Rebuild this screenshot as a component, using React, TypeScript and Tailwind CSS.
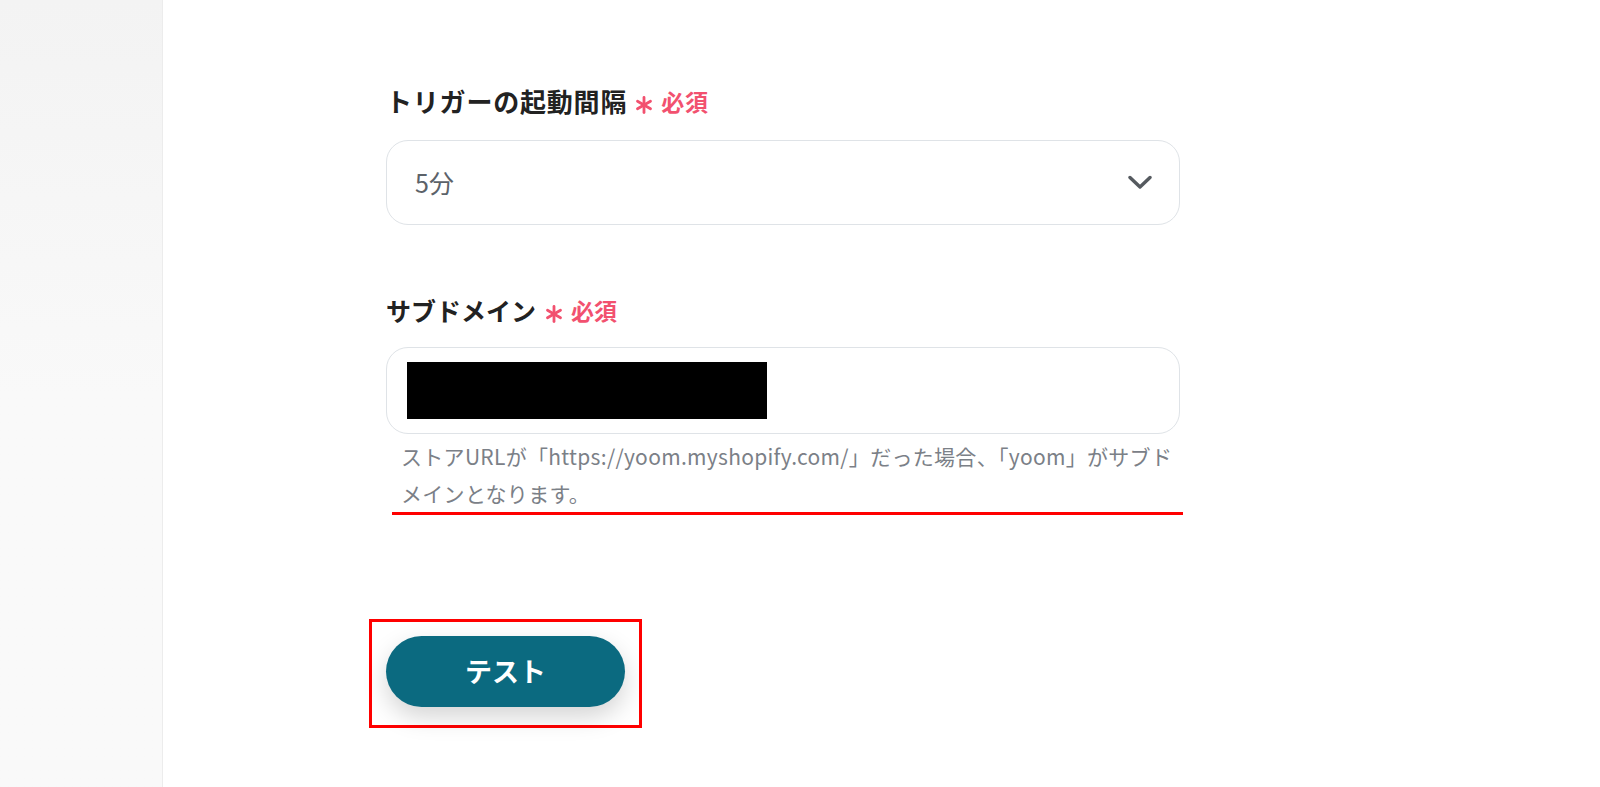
const font = "font-['Noto_Sans_CJK_JP','Noto_Sans',sans-serif]";

const Required = ({ gap }: { gap: string }) => (
  <span className={`inline-flex items-center text-[#f2516f] ${gap}`}>
    <svg width="18" height="18" viewBox="0 0 18 18" className="relative top-[4px]">
      <g stroke="#f2516f" strokeWidth="2.8" strokeLinecap="round">
        <line x1="9" y1="1.5" x2="9" y2="16.5" />
        <line x1="2.5" y1="5.2" x2="15.5" y2="12.8" />
        <line x1="2.5" y1="12.8" x2="15.5" y2="5.2" />
      </g>
    </svg>
    <span className="ml-[8px] text-[23px] font-bold">必須</span>
  </span>
);

const App = () => {
  return (
    <div className={`flex h-[787px] w-full bg-white ${font}`}>
      {/* SIDEBAR */}
      <aside className="w-[163px] shrink-0 border-r border-[#ececec] bg-gradient-to-b from-[#f3f3f3] via-[#f9f9f9] to-[#f9f9f9]" />

      {/* MAIN */}
      <main className="flex-1 pl-[223px] pt-[83px]">
        <div className="w-[794px]">
          <label className="flex items-center text-[26px] font-bold leading-[36px] tracking-[0.8px] text-[#222]">
            トリガーの起動間隔
            <Required gap="ml-[8px]" />
          </label>

          <div className="mt-[21px] flex h-[85px] items-center justify-between rounded-[22px] border border-[#dfe3e7] pl-[28px] pr-[27px]">
            <span className="text-[25px] text-[#5c6269]">5分</span>
            <svg width="24" height="15" viewBox="0 0 24 15" fill="none">
              <path d="M2 2.5 L12 12 L22 2.5" stroke="#555a5f" strokeWidth="3.4" strokeLinecap="round" strokeLinejoin="round" />
            </svg>
          </div>

          <label className="mt-[67px] flex items-center text-[25px] font-bold leading-[36px] text-[#222]">
            サブドメイン
            <Required gap="ml-[9px]" />
          </label>

          <div className="mt-[19px] flex h-[87px] items-center rounded-[22px] border border-[#dfe3e7] pl-[20px]">
            <div className="h-[57px] w-[360px] bg-black" />
          </div>

          <div className="ml-[6px] mt-[4px] w-[791px] border-b-[3px] border-[#ff0000] pl-[9px] text-[21px] leading-[37px] tracking-[0.3px] text-[#7b8087]">
            ストアURLが「https://yoom.myshopify.com/」だった場合、「yoom」がサブド
            <br />
            メインとなります。
          </div>

          <div className="-ml-[17px] mt-[104px] inline-block border-[3px] border-[#ff0000] px-[14px] pb-[18px] pt-[14px]">
            <button className="flex h-[71px] w-[239px] items-center justify-center rounded-full bg-[#0b6a80] text-[27px] font-bold text-white shadow-[0_10px_24px_rgba(0,0,0,0.17)]">
              テスト
            </button>
          </div>
        </div>
      </main>
    </div>
  );
};

export default App;
